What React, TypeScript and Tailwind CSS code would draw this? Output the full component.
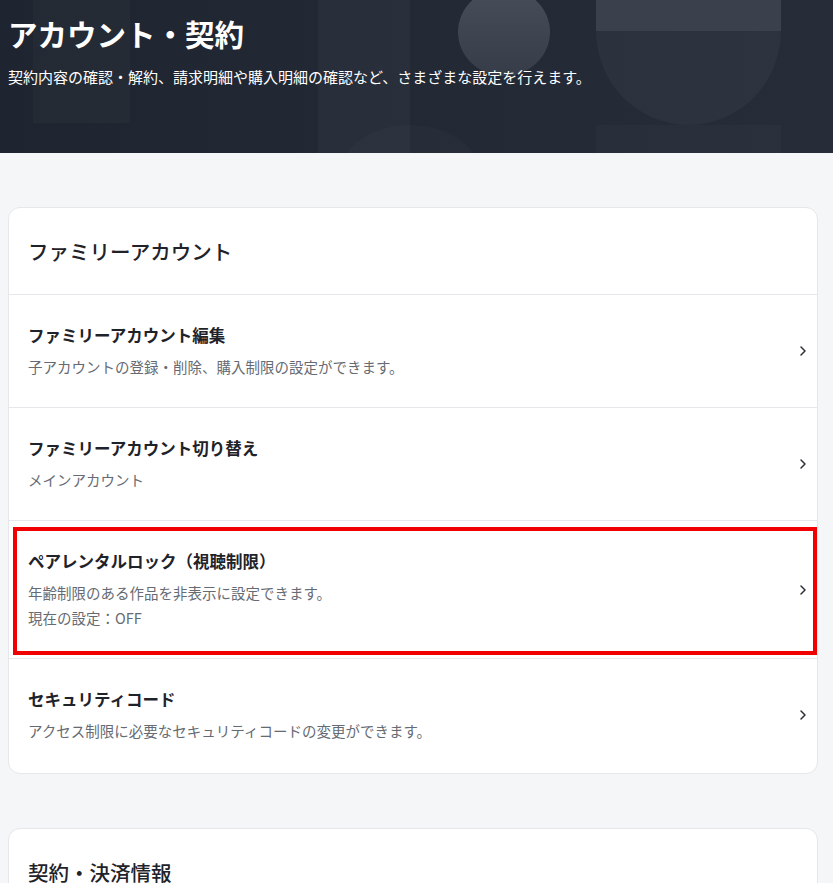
import { ChevronRight } from "lucide-react";

type Item = {
  title: string;
  lines: string[];
  marked?: boolean;
};

const familyItems: Item[] = [
  { title: "ファミリーアカウント編集", lines: ["子アカウントの登録・削除、購入制限の設定ができます。"] },
  { title: "ファミリーアカウント切り替え", lines: ["メインアカウント"] },
  {
    title: "ペアレンタルロック（視聴制限）",
    lines: ["年齢制限のある作品を非表示に設定できます。", "現在の設定：OFF"],
    marked: true,
  },
  { title: "セキュリティコード", lines: ["アクセス制限に必要なセキュリティコードの変更ができます。"] },
];

const font = { fontFamily: '"Noto Sans CJK JP", "Noto Sans", sans-serif' };

// background artwork of the hero band
function HeroArt() {
  return (
    <svg className="absolute inset-0 h-full w-full" viewBox="0 0 833 153" preserveAspectRatio="none">
      <defs>
        <linearGradient id="bg" x1="0" y1="0" x2="1" y2="0">
          <stop offset="0" stopColor="#1f2530" />
          <stop offset="1" stopColor="#262d39" />
        </linearGradient>
        <linearGradient id="ball" x1="0" y1="0" x2="0" y2="1">
          <stop offset="0" stopColor="#474e59" />
          <stop offset="1" stopColor="#363d49" />
        </linearGradient>
      </defs>
      <rect width="833" height="153" fill="url(#bg)" />
      <rect x="33" y="0" width="97" height="123" fill="#ffffff" fillOpacity="0.025" />
      <rect x="318" y="0" width="92" height="153" fill="#ffffff" fillOpacity="0.03" />
      <ellipse cx="410" cy="175" rx="70" ry="50" fill="#ffffff" fillOpacity="0.02" />
      <ellipse cx="504" cy="32" rx="46" ry="44" fill="url(#ball)" />
      <rect x="596" y="0" width="185" height="31" fill="#3a414c" />
      <path d="M596 31 A92.5 94 0 0 0 781 31 Z" fill="#ffffff" fillOpacity="0.035" />
      <rect x="596" y="125" width="185" height="28" fill="#ffffff" fillOpacity="0.02" />
    </svg>
  );
}

function Hero() {
  return (
    <header className="relative h-[153px] overflow-hidden bg-[#232a36]">
      <HeroArt />
      <div className="relative px-2 pt-[13px]">
        <h1 className="text-[29.5px] font-bold leading-[40px] text-white">アカウント・契約</h1>
        <p className="mt-[14px] text-[15px] leading-5 text-white">
          契約内容の確認・解約、請求明細や購入明細の確認など、さまざまな設定を行えます。
        </p>
      </div>
    </header>
  );
}

function Row({ item }: { item: Item }) {
  return (
    <div className="relative flex items-center border-t border-[#e5e7eb] py-[28px] pl-[19px] pr-[6px] last:pb-[30px]">
      <div className="flex-1">
        <div className="text-[16.5px] font-bold leading-[24px] text-[#1f2329]">{item.title}</div>
        <div className="mt-[7px] text-[14.5px] leading-[25px] text-[#666b73]">
          {item.lines.map((l) => (
            <div key={l}>{l}</div>
          ))}
        </div>
      </div>
      <ChevronRight size={16} strokeWidth={2.25} className="text-[#2b2f36]" />
      {item.marked ? (
        <div className="pointer-events-none absolute bottom-[3px] left-[4px] right-0 top-[6px] border-[4px] border-[#f00000]" />
      ) : null}
    </div>
  );
}

export default function App() {
  return (
    <div className="min-h-screen bg-[#f5f6f8]" style={font}>
      <Hero />
      <main className="pb-10 pl-2 pr-[15px] pt-[54px]">
        <section className="overflow-hidden rounded-xl border border-[#e5e7eb] bg-white">
          <h2 className="px-[19px] py-[28px] text-[20.5px] font-medium leading-[30px] text-[#1f2329]">
            ファミリーアカウント
          </h2>
          {familyItems.map((it) => (
            <Row key={it.title} item={it} />
          ))}
        </section>
        <section className="mt-[54px] overflow-hidden rounded-xl border border-[#e5e7eb] bg-white">
          <h2 className="px-[19px] py-[28px] text-[20.5px] font-medium leading-[30px] text-[#1f2329]">
            契約・決済情報
          </h2>
          <div className="h-[100px]" />
        </section>
      </main>
    </div>
  );
}
